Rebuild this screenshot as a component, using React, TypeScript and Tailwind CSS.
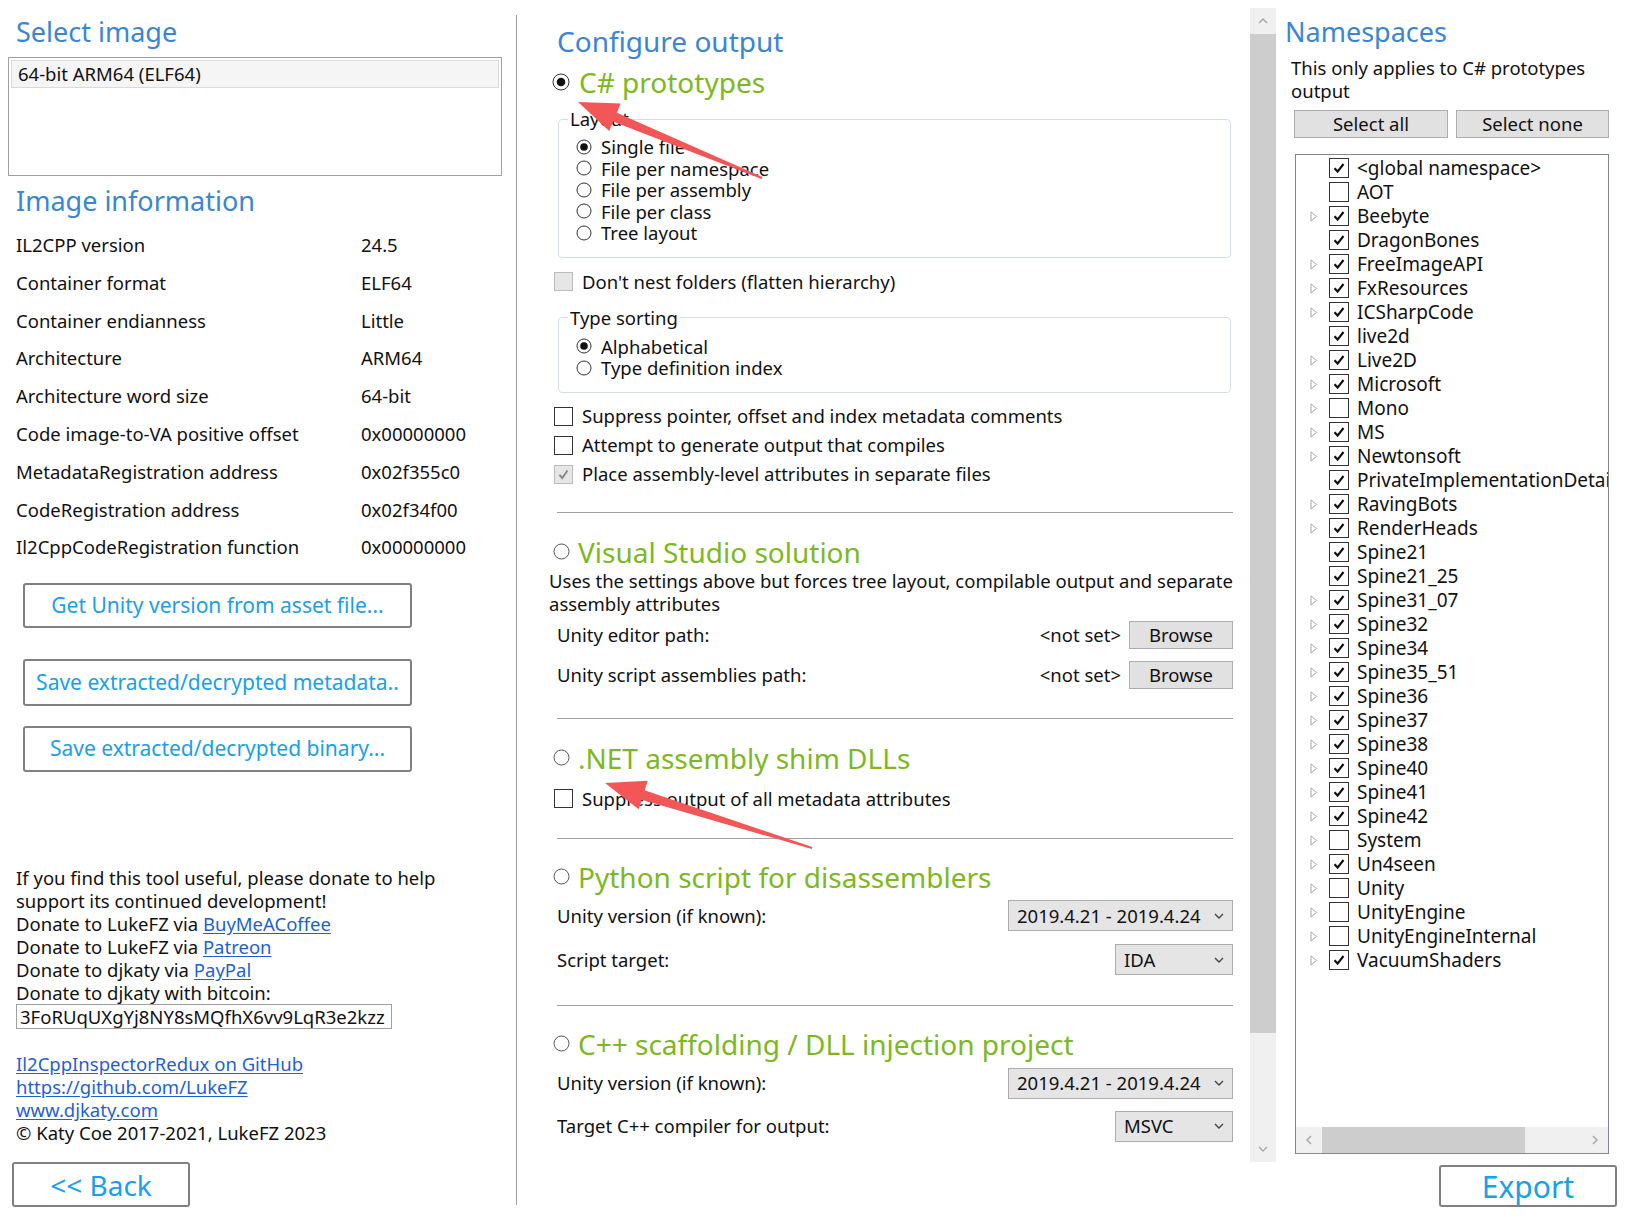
import React from "react";

const BLUE_H = "text-[#3a86d2]";

function Radio({ checked }: { checked?: boolean }) {
  return (
    <svg width="16" height="16" viewBox="0 0 16 16" className="shrink-0">
      <circle cx="8" cy="8" r="7" fill="white" stroke="#333" strokeWidth="1" />
      {checked && <circle cx="8" cy="8" r="3.8" fill="#111" />}
    </svg>
  );
}

function HeadRadio() {
  return (
    <svg width="17" height="17" viewBox="0 0 17 17" className="shrink-0">
      <circle cx="8.5" cy="8.5" r="7.5" fill="white" stroke="#555" strokeWidth="1" />
    </svg>
  );
}

function HeadRadioChecked() {
  return (
    <svg width="18" height="18" viewBox="0 0 18 18" className="shrink-0">
      <circle cx="9" cy="9" r="8" fill="white" stroke="#333" strokeWidth="1" />
      <circle cx="9" cy="9" r="4.3" fill="#111" />
    </svg>
  );
}

function Check({ checked, disabled }: { checked?: boolean; disabled?: boolean }) {
  return (
    <div
      className={
        disabled
          ? "w-[19px] h-[19px] shrink-0 border border-[#bcbcbc] bg-[#e6e6e6] flex items-center justify-center"
          : "w-[19px] h-[19px] shrink-0 border border-[#333] bg-white flex items-center justify-center"
      }
    >
      {checked && (
        <svg width="13" height="13" viewBox="0 0 13 13">
          <polyline points="2.5,6.8 5.2,10 10.5,2.5" fill="none" stroke={disabled ? "#8a8a8a" : "#111"} strokeWidth="2" />
        </svg>
      )}
    </div>
  );
}

function TreeCheck({ checked }: { checked?: boolean }) {
  return (
    <div className="w-[20px] h-[20px] shrink-0 border border-[#333] bg-white flex items-center justify-center">
      {checked && (
        <svg width="14" height="14" viewBox="0 0 14 14">
          <polyline points="2.5,7.2 5.6,10.6 11.5,3" fill="none" stroke="#111" strokeWidth="2.2" />
        </svg>
      )}
    </div>
  );
}

function Chevron({ dir = "down", color = "#555" }: { dir?: "down" | "up" | "left" | "right"; color?: string }) {
  const pts: Record<string, string> = {
    down: "2,4 6,8 10,4",
    up: "2,8 6,4 10,8",
    left: "8,2 4,6 8,10",
    right: "4,2 8,6 4,10",
  };
  return (
    <svg width="12" height="12" viewBox="0 0 12 12" className="shrink-0">
      <polyline points={pts[dir]} fill="none" stroke={color} strokeWidth="1.4" />
    </svg>
  );
}

function Dropdown({ value, w }: { value: string; w: string }) {
  return (
    <div className={`${w} h-[31px] border border-[#acacac] bg-[#e5e5e5] flex items-center pl-[8px] pr-[7px]`}>
      <span className="flex-1">{value}</span>
      <Chevron dir="down" color="#444" />
    </div>
  );
}

function Browse() {
  return (
    <div className="w-[104px] h-[28px] border border-[#adadad] bg-[#e1e1e1] flex items-center justify-center">
      Browse
    </div>
  );
}

function Arrow({ tip, tail }: { tip: [number, number]; tail: [number, number] }) {
  const dx = tip[0] - tail[0];
  const dy = tip[1] - tail[1];
  const len = Math.sqrt(dx * dx + dy * dy);
  const ux = dx / len;
  const uy = dy / len;
  const nx = -uy;
  const ny = ux;
  const headLen = 40;
  const headW = 15;
  const bx = tip[0] - ux * headLen;
  const by = tip[1] - uy * headLen;
  const neckX = tip[0] - ux * (headLen - 8);
  const neckY = tip[1] - uy * (headLen - 8);
  const p = (x: number, y: number) => `${x.toFixed(1)},${y.toFixed(1)}`;
  const head = [p(tip[0], tip[1]), p(bx + nx * headW, by + ny * headW), p(bx - nx * headW, by - ny * headW)].join(" ");
  const shaft = [
    p(tail[0] + nx * 1, tail[1] + ny * 1),
    p(neckX + nx * 5, neckY + ny * 5),
    p(neckX - nx * 5, neckY - ny * 5),
    p(tail[0] - nx * 1, tail[1] - ny * 1),
  ].join(" ");
  return (
    <g fill="#f25656">
      <polygon points={shaft} />
      <polygon points={head} />
    </g>
  );
}

const namespaces: { name: string; checked: boolean; exp: boolean }[] = [
  { name: "<global namespace>", checked: true, exp: false },
  { name: "AOT", checked: false, exp: false },
  { name: "Beebyte", checked: true, exp: true },
  { name: "DragonBones", checked: true, exp: false },
  { name: "FreeImageAPI", checked: true, exp: true },
  { name: "FxResources", checked: true, exp: true },
  { name: "ICSharpCode", checked: true, exp: true },
  { name: "live2d", checked: true, exp: false },
  { name: "Live2D", checked: true, exp: true },
  { name: "Microsoft", checked: true, exp: true },
  { name: "Mono", checked: false, exp: true },
  { name: "MS", checked: true, exp: true },
  { name: "Newtonsoft", checked: true, exp: true },
  { name: "PrivateImplementationDetails", checked: true, exp: false },
  { name: "RavingBots", checked: true, exp: true },
  { name: "RenderHeads", checked: true, exp: true },
  { name: "Spine21", checked: true, exp: false },
  { name: "Spine21_25", checked: true, exp: false },
  { name: "Spine31_07", checked: true, exp: true },
  { name: "Spine32", checked: true, exp: true },
  { name: "Spine34", checked: true, exp: true },
  { name: "Spine35_51", checked: true, exp: true },
  { name: "Spine36", checked: true, exp: true },
  { name: "Spine37", checked: true, exp: true },
  { name: "Spine38", checked: true, exp: true },
  { name: "Spine40", checked: true, exp: true },
  { name: "Spine41", checked: true, exp: true },
  { name: "Spine42", checked: true, exp: true },
  { name: "System", checked: false, exp: true },
  { name: "Un4seen", checked: true, exp: true },
  { name: "Unity", checked: false, exp: true },
  { name: "UnityEngine", checked: false, exp: true },
  { name: "UnityEngineInternal", checked: false, exp: true },
  { name: "VacuumShaders", checked: true, exp: true },
];

const info: [string, string][] = [
  ["IL2CPP version", "24.5"],
  ["Container format", "ELF64"],
  ["Container endianness", "Little"],
  ["Architecture", "ARM64"],
  ["Architecture word size", "64-bit"],
  ["Code image-to-VA positive offset", "0x00000000"],
  ["MetadataRegistration address", "0x02f355c0"],
  ["CodeRegistration address", "0x02f34f00"],
  ["Il2CppCodeRegistration function", "0x00000000"],
];

export default function App() {
  const btn =
    "ml-[23px] w-[389px] border-2 border-[#808080] rounded-[3px] flex items-center justify-center text-[21px] text-[#1aa0e6]";
  const link = "text-[#1f5fcf] underline underline-offset-2";
  const green = "text-[28px] leading-[38px] text-[#7db81e] whitespace-nowrap";
  return (
    <div className="relative w-[1628px] h-[1218px] bg-white overflow-hidden flex font-['Noto_Sans','Liberation_Sans',sans-serif] text-[#111] text-[18.5px]">
      {/* Left panel */}
      <div className="w-[516px] shrink-0 flex flex-col">
        <div className={`pt-[14px] pl-[16px] h-[50px] text-[27px] leading-[36px] ${BLUE_H}`}>Select image</div>
        <div className="ml-[8px] mt-[7px] w-[494px] h-[119px] border border-[#a0a0a0] p-[2px]">
          <div className="h-[28px] border border-[#dadada] bg-[#f5f5f5] pl-[6px] flex items-center">
            64-bit ARM64 (ELF64)
          </div>
        </div>
        <div className={`mt-[7px] pl-[16px] h-[36px] text-[27px] leading-[36px] ${BLUE_H}`}>Image information</div>
        <div className="mt-[7px] flex flex-col">
          {info.map(([k, v]) => (
            <div key={k} className="h-[37.8px] flex items-center pl-[16px]">
              <span className="w-[345px] shrink-0">{k}</span>
              <span>{v}</span>
            </div>
          ))}
        </div>
        <div className={`${btn} mt-[17px] h-[45px]`}>Get Unity version from asset file...</div>
        <div className={`${btn} mt-[31px] h-[47px]`}>Save extracted/decrypted metadata..</div>
        <div className={`${btn} mt-[20px] h-[46px]`}>Save extracted/decrypted binary...</div>
        <div className="mt-[94px] pl-[16px] leading-[23px]">
          <div>If you find this tool useful, please donate to help</div>
          <div>support its continued development!</div>
          <div>
            Donate to LukeFZ via <span className={link}>BuyMeACoffee</span>
          </div>
          <div>
            Donate to LukeFZ via <span className={link}>Patreon</span>
          </div>
          <div>
            Donate to djkaty via <span className={link}>PayPal</span>
          </div>
          <div>Donate to djkaty with bitcoin:</div>
          <div className="w-[376px] h-[25px] border border-[#a0a0a0] pl-[3px] flex items-center overflow-hidden whitespace-nowrap text-[18.5px]">
            3FoRUqUXgYj8NY8sMQfhX6vv9LqR3e2kzz
          </div>
          <div className="mt-[23px]">
            <span className={link}>Il2CppInspectorRedux on GitHub</span>
          </div>
          <div>
            <span className={link}>https://github.com/LukeFZ</span>
          </div>
          <div>
            <span className={link}>www.djkaty.com</span>
          </div>
          <div>© Katy Coe 2017-2021, LukeFZ 2023</div>
        </div>
        <div className="ml-[12px] mt-[18px] w-[178px] h-[45px] border-2 border-[#808080] rounded-[3px] flex items-center justify-center text-[28px] text-[#1aa0e6]">
          &lt;&lt; Back
        </div>
      </div>

      {/* Divider */}
      <div className="w-px shrink-0 bg-[#a0a0a0] mt-[15px] mb-[13px]" />

      {/* Middle panel */}
      <div className="w-[733px] shrink-0 pl-[40px] pr-[17px] flex flex-col">
        <div className={`mt-[22px] h-[38px] text-[28px] leading-[38px] ${BLUE_H}`}>Configure output</div>
        <div className="h-[44px] flex items-center ml-[-5px] gap-[9px]">
          <HeadRadioChecked />
          <span className={green}>C# prototypes</span>
        </div>
        <fieldset className="mt-[4px] ml-[1px] mr-[2px] border border-[#d5dfe5] rounded-[4px] pt-[6px] pb-[13px]">
          <legend className="ml-[9px] px-[2px] leading-[22px]">Layout</legend>
          {[
            ["Single file", true],
            ["File per namespace", false],
            ["File per assembly", false],
            ["File per class", false],
            ["Tree layout", false],
          ].map(([l, c]) => (
            <div key={l as string} className="h-[21.5px] flex items-center pl-[17px] gap-[9px]">
              <Radio checked={c as boolean} />
              <span className="leading-[21px]">{l as string}</span>
            </div>
          ))}
        </fieldset>
        <div className="mt-[10px] h-[28px] flex items-center ml-[-3px] gap-[9px]">
          <Check disabled />
          <span>Don't nest folders (flatten hierarchy)</span>
        </div>
        <fieldset className="mt-[11px] ml-[1px] mr-[2px] border border-[#d5dfe5] rounded-[4px] pt-[7px] pb-[13px]">
          <legend className="ml-[9px] px-[2px] leading-[22px]">Type sorting</legend>
          {[
            ["Alphabetical", true],
            ["Type definition index", false],
          ].map(([l, c]) => (
            <div key={l as string} className="h-[21.5px] flex items-center pl-[17px] gap-[9px]">
              <Radio checked={c as boolean} />
              <span className="leading-[21px]">{l as string}</span>
            </div>
          ))}
        </fieldset>
        <div className="mt-[9px] flex flex-col">
          <div className="h-[29px] flex items-center ml-[-3px] gap-[9px]">
            <Check />
            <span>Suppress pointer, offset and index metadata comments</span>
          </div>
          <div className="h-[29px] flex items-center ml-[-3px] gap-[9px]">
            <Check />
            <span>Attempt to generate output that compiles</span>
          </div>
          <div className="h-[29px] flex items-center ml-[-3px] gap-[9px]">
            <Check checked disabled />
            <span>Place assembly-level attributes in separate files</span>
          </div>
        </div>
        <div className="mt-[23px] h-px bg-[#a0a0a0]" />

        <div className="mt-[22px] h-[34px] flex items-center ml-[-4px] gap-[8px]">
          <HeadRadio />
          <span className={green}>Visual Studio solution</span>
        </div>
        <div className="ml-[-8px] leading-[23px] whitespace-nowrap">
          Uses the settings above but forces tree layout, compilable output and separate
          <br />
          assembly attributes
        </div>
        <div className="h-[40px] flex items-center">
          <span className="flex-1">Unity editor path:</span>
          <span className="mr-[8px]">&lt;not set&gt;</span>
          <Browse />
        </div>
        <div className="h-[40px] flex items-center">
          <span className="flex-1">Unity script assemblies path:</span>
          <span className="mr-[8px]">&lt;not set&gt;</span>
          <Browse />
        </div>
        <div className="mt-[23px] h-px bg-[#a0a0a0]" />

        <div className="mt-[19px] h-[40px] flex items-center ml-[-4px] gap-[8px]">
          <HeadRadio />
          <span className={green}>.NET assembly shim DLLs</span>
        </div>
        <div className="mt-[7px] h-[28px] flex items-center ml-[-3px] gap-[9px]">
          <Check />
          <span>Suppress output of all metadata attributes</span>
        </div>
        <div className="mt-[25px] h-px bg-[#a0a0a0]" />

        <div className="mt-[18px] h-[40px] flex items-center ml-[-4px] gap-[8px]">
          <HeadRadio />
          <span className={green}>Python script for disassemblers</span>
        </div>
        <div className="mt-[-3px] h-[44px] flex items-center">
          <span className="flex-1">Unity version (if known):</span>
          <Dropdown value="2019.4.21 - 2019.4.24" w="w-[225px]" />
        </div>
        <div className="h-[44px] flex items-center">
          <span className="flex-1">Script target:</span>
          <Dropdown value="IDA" w="w-[118px]" />
        </div>
        <div className="mt-[23px] h-px bg-[#a0a0a0]" />

        <div className="mt-[18px] h-[40px] flex items-center ml-[-4px] gap-[8px]">
          <HeadRadio />
          <span className={green}>C++ scaffolding / DLL injection project</span>
        </div>
        <div className="mt-[-2px] h-[43px] flex items-center">
          <span className="flex-1">Unity version (if known):</span>
          <Dropdown value="2019.4.21 - 2019.4.24" w="w-[225px]" />
        </div>
        <div className="h-[43px] flex items-center">
          <span className="flex-1">Target C++ compiler for output:</span>
          <Dropdown value="MSVC" w="w-[118px]" />
        </div>
      </div>

      {/* Vertical scrollbar */}
      <div className="w-[26px] shrink-0 mt-[8px] h-[1154px] bg-[#f0f0f0] flex flex-col">
        <div className="h-[26px] flex items-center justify-center">
          <Chevron dir="up" color="#a6a6a6" />
        </div>
        <div className="h-[999px] bg-[#cdcdcd]" />
        <div className="flex-1" />
        <div className="h-[26px] flex items-center justify-center">
          <Chevron dir="down" color="#a6a6a6" />
        </div>
      </div>

      {/* Right panel */}
      <div className="flex-1 flex flex-col">
        <div className={`pt-[14px] pl-[9px] h-[50px] text-[27px] leading-[36px] ${BLUE_H}`}>Namespaces</div>
        <div className="mt-[6px] pl-[15px] leading-[23px]">
          This only applies to C# prototypes
          <br />
          output
        </div>
        <div className="mt-[8px] pl-[18px] flex gap-[8px]">
          <div className="w-[154px] h-[28px] border border-[#adadad] bg-[#e1e1e1] flex items-center justify-center">
            Select all
          </div>
          <div className="w-[153px] h-[28px] border border-[#adadad] bg-[#e1e1e1] flex items-center justify-center">
            Select none
          </div>
        </div>
        <div className="mt-[16px] ml-[19px] w-[314px] h-[1000px] border border-[#828790] flex flex-col">
          <div className="flex-1 overflow-hidden pt-[1px]">
            {namespaces.map((n) => (
              <div key={n.name} className="h-[24px] flex items-center whitespace-nowrap text-[19px]">
                <div className="w-[33px] shrink-0 flex items-center pl-[14px]">
                  {n.exp && (
                    <svg width="8" height="11" viewBox="0 0 8 11">
                      <polygon points="1,1 6.5,5.5 1,10" fill="none" stroke="#a6a6a6" strokeWidth="1" />
                    </svg>
                  )}
                </div>
                <TreeCheck checked={n.checked} />
                <span className="ml-[8px]">{n.name}</span>
              </div>
            ))}
          </div>
          <div className="h-[26px] bg-[#f0f0f0] flex items-center">
            <div className="w-[26px] flex items-center justify-center">
              <Chevron dir="left" color="#a6a6a6" />
            </div>
            <div className="w-[203px] h-full bg-[#cdcdcd]" />
            <div className="flex-1" />
            <div className="w-[26px] flex items-center justify-center">
              <Chevron dir="right" color="#a6a6a6" />
            </div>
          </div>
        </div>
        <div className="mt-[11px] ml-[163px] w-[178px] h-[42px] border-2 border-[#808080] rounded-[3px] flex items-center justify-center text-[30px] text-[#1aa0e6]">
          Export
        </div>
      </div>

      {/* Annotation arrows */}
      <svg className="absolute inset-0 pointer-events-none" width="1628" height="1218">
        <Arrow tip={[578, 102]} tail={[762, 178]} />
        <Arrow tip={[605, 783]} tail={[812, 848]} />
      </svg>
    </div>
  );
}
